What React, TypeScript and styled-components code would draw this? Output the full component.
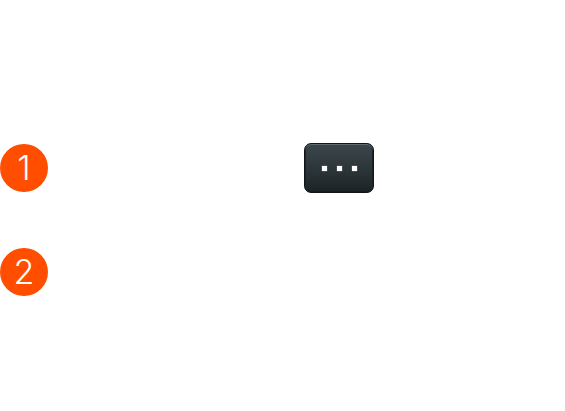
import React from "react";
import styled, { createGlobalStyle } from "styled-components";

const Global = createGlobalStyle`
  html, body { margin: 0; padding: 0; background: #fff; }
  body { font-family: Inter, "Liberation Sans", Arial, sans-serif; }
`;

const Page = styled.div`
  width: 565px;
  height: 411px;
  padding-top: 143px;
  box-sizing: border-box;
  overflow: hidden;
  display: flex;
  flex-direction: column;
  gap: 54px;
`;

const Row = styled.div`
  display: flex;
  align-items: center;
  height: 50px;
`;

const Badge = styled.div`
  width: 48px;
  height: 48px;
  flex: none;
  border-radius: 50%;
  background: #ff4e00;
  color: #fff;
  font-size: 34px;
  font-weight: 350;
  line-height: 48px;
  text-align: center;
`;

const MoreButton = styled.button`
  margin-left: 256px;
  width: 70px;
  height: 50px;
  padding: 1px 0 0 1px;
  box-sizing: border-box;
  border: 1px solid #111517;
  border-radius: 7px;
  background: linear-gradient(#3b464c 0%, #2d363a 50%, #1c2326 100%);
  box-shadow: inset 0 1px 0 #5f6b71, inset 1px 0 0 #1e2528, inset -1px 0 0 #1e2528, inset 0 -1px 0 #171c1e;
  display: flex;
  align-items: center;
  justify-content: center;
  gap: 10px;
`;

const Dot = styled.span`
  width: 5px;
  height: 5px;
  background: #fff;
  box-shadow: 0 0 1px rgba(255, 255, 255, 0.7);
`;

export default function App() {
  return (
    <>
      <Global />
      <Page>
        <Row>
          <Badge>1</Badge>
          <MoreButton aria-label="More">
            <Dot />
            <Dot />
            <Dot />
          </MoreButton>
        </Row>
        <Row>
          <Badge>2</Badge>
        </Row>
      </Page>
    </>
  );
}
